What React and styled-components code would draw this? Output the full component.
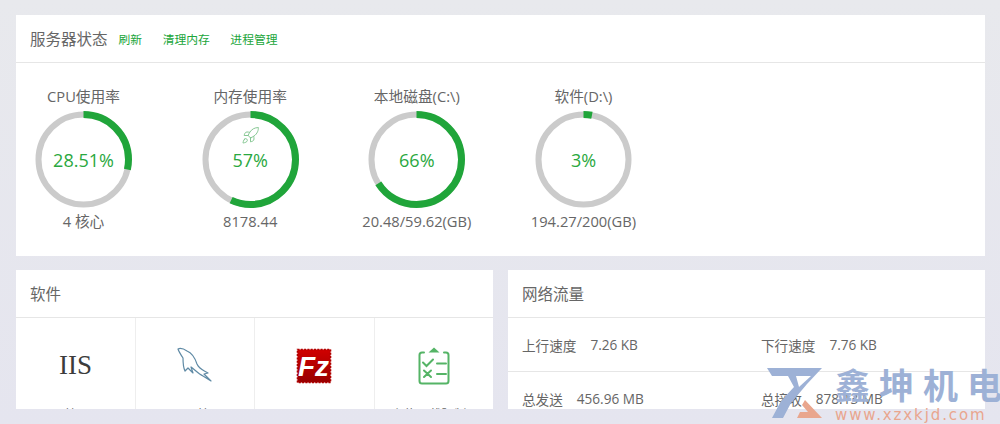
import React from 'react';
import styled, { createGlobalStyle } from 'styled-components';
import { Rocket } from 'lucide-react';

const GlobalStyle = createGlobalStyle`
  html, body {
    margin: 0;
    padding: 0;
    height: 424px;
    overflow: hidden;
    background: #e7e8ee;
    font-family: "Open Sans", "Noto Sans CJK SC", sans-serif;
    color: #666;
  }
  * { box-sizing: border-box; }
`;

const Page = styled.div`
  width: 1000px;
  height: 424px;
  padding: 15px 15px 0 16px;
  position: relative;
  overflow: hidden;
  background: linear-gradient(#e8e9ed, #e5e5ef);
`;

const Card = styled.section`
  background: #fff;
  height: ${props => props.$height}px;
  overflow: hidden;
`;

const CardHeader = styled.header`
  height: 48px;
  padding: 0 14px;
  display: flex;
  align-items: center;
  border-bottom: 1px solid #e6e6e6;
`;

const Title = styled.h2`
  margin: 0 11px 0 0;
  font-size: 15.5px;
  font-weight: 400;
  color: #666;
`;

const HeaderLink = styled.a`
  font-size: 11.8px;
  color: #20a53a;
  margin-right: 20.5px;
`;

const RingRow = styled.div`
  display: flex;
  gap: 30.67px;
  padding-top: 23px;
  margin-left: -0.5px;
`;

const RingItem = styled.div`
  width: 136px;
  display: flex;
  flex-direction: column;
  align-items: center;
  flex: none;
`;

const RingLabel = styled.div`
  font-size: 14.7px;
  line-height: 20px;
  white-space: nowrap;
`;

const RingBox = styled.div`
  position: relative;
  width: 97px;
  height: 97px;
  margin-top: 5px;
  display: flex;
  align-items: center;
  justify-content: center;
`;

const RingSvg = styled.svg`
  position: absolute;
  inset: 0;
`;

const Percent = styled.span`
  position: relative;
  font-size: 18px;
  color: #2aa840;
`;

const RocketMark = styled(Rocket)`
  position: absolute;
  top: 15px;
  left: 39px;
  color: #7fc48d;
`;

const RingSub = styled.div`
  font-size: 14.7px;
  line-height: 20px;
  margin-top: 3px;
  white-space: nowrap;
`;

const Columns = styled.div`
  display: flex;
  gap: 15px;
  margin-top: 14px;
`;

const Column = styled.div`
  width: 477px;
  flex: none;
`;

const SoftGrid = styled.div`
  display: grid;
  grid-template-columns: 120px 119px 119.5px 1fr;
`;

const SoftCell = styled.div`
  height: 120px;
  display: flex;
  flex-direction: column;
  align-items: center;
  padding-top: 17px;
  border-right: 1px solid #eee;

  &:last-child {
    border-right: none;
  }
`;

const SoftIcon = styled.div`
  height: 61px;
  width: 100%;
  display: flex;
  align-items: center;
  justify-content: center;
`;

const IisMark = styled.span`
  font-family: "Liberation Serif", serif;
  font-size: 27px;
  color: #3c3c3c;
`;

const SoftName = styled.div`
  margin-top: 11px;
  font-size: 12.5px;
  line-height: 16px;
  white-space: nowrap;
  color: #666;

  span {
    color: #20a53a;
    margin-left: 3px;
  }
`;

const NetRow = styled.div`
  display: grid;
  grid-template-columns: 239px 1fr;
  height: 54px;
  padding-left: 14px;
  align-items: center;
  border-bottom: 1px solid #e6e6e6;
  font-size: 13.6px;
`;

const NetStat = styled.div`
  display: flex;
  gap: 14px;
  white-space: nowrap;
`;

const Watermark = styled.div`
  position: absolute;
  left: 767px;
  top: 360px;
  width: 233px;
  height: 64px;
  display: flex;
  pointer-events: none;
`;

const WatermarkLogo = styled.svg`
  flex: none;
  margin: 7px 13px 0 0;
`;

const WatermarkText = styled.div`
  display: flex;
  flex-direction: column;
  white-space: nowrap;
`;

const WatermarkName = styled.div`
  font-family: "Noto Sans CJK SC", sans-serif;
  font-size: 35px;
  line-height: 48px;
  font-weight: 700;
  letter-spacing: 9px;
  color: #9db1d6;
`;

const WatermarkUrl = styled.div`
  font-family: "DejaVu Sans", sans-serif;
  font-size: 15px;
  line-height: 14px;
  letter-spacing: 1.9px;
  color: #e9a68e;
`;

const rings = [
  { label: 'CPU使用率', percent: 28.51, sub: '4 核心' },
  { label: '内存使用率', percent: 57, sub: '8178.44', rocket: true },
  { label: '本地磁盘(C:\\)', percent: 66, sub: '20.48/59.62(GB)' },
  { label: '软件(D:\\)', percent: 3, sub: '194.27/200(GB)' },
];

const RADIUS = 45;
const CIRC = 2 * Math.PI * RADIUS;

const Ring = ({ label, percent, sub, rocket }) => (
  <RingItem>
    <RingLabel>{label}</RingLabel>
    <RingBox>
      <RingSvg width="97" height="97" viewBox="0 0 97 97">
        <circle cx="48.5" cy="48.5" r={RADIUS} fill="none" stroke="#cbcbcb" strokeWidth="6" />
        <circle
          cx="48.5"
          cy="48.5"
          r={RADIUS}
          fill="none"
          stroke="#20a53a"
          strokeWidth="7"
          strokeDasharray={`${(CIRC * percent) / 100} ${CIRC}`}
          transform="rotate(-90 48.5 48.5)"
        />
      </RingSvg>
      {rocket && <RocketMark size={19} strokeWidth={1.2} />}
      <Percent>{percent}%</Percent>
    </RingBox>
    <RingSub>{sub}</RingSub>
  </RingItem>
);

const Dolphin = () => (
  <svg width="40" height="40" viewBox="0 0 40 40">
    <path
      d="M3 3C5 2 9 3 12 5C17 7 20 12 22 18C24 23 28 24 33 27L29 28C31 30 34 33 36 35L28 30C24 28 20 24 16 21L18 27L13 22L10 25C8 21 8 16 8 12C6 9 4 6 3 3Z"
      fill="none"
      stroke="#5f8aa5"
      strokeWidth="1.2"
      strokeLinejoin="round"
    />
  </svg>
);

const FileZilla = () => (
  <svg width="36" height="36" viewBox="0 0 36 36">
    <defs>
      <linearGradient id="fz" x1="0" y1="0" x2="0" y2="1">
        <stop offset="0" stopColor="#d00000" />
        <stop offset="1" stopColor="#980000" />
      </linearGradient>
    </defs>
    <rect x="1.5" y="1.5" width="33" height="33" fill="url(#fz)" stroke="#b00000" strokeWidth="1.6" strokeDasharray="2 1.3" />
    <text
      x="17.5"
      y="28"
      textAnchor="middle"
      fontFamily="Liberation Sans, sans-serif"
      fontSize="28"
      fontWeight="700"
      fontStyle="italic"
      fill="#fff"
    >
      Fz
    </text>
  </svg>
);

const Checklist = () => (
  <svg width="32" height="38" viewBox="0 0 32 38" fill="none" stroke="#55b466" strokeWidth="2" strokeLinecap="round">
    <path d="M16 0.5L21.5 5.5H10.5Z" fill="#55b466" stroke="none" />
    <path d="M6 5.5H4C2.5 5.5 1.5 6.5 1.5 8V34C1.5 35.5 2.5 36.5 4 36.5H28C29.5 36.5 30.5 35.5 30.5 34V8C30.5 6.5 29.5 5.5 28 5.5H26" />
    <path d="M5 15.5L8.5 19L15 12.5" />
    <path d="M19 16.5H28" />
    <path d="M6 23.5L13 30M13 23.5L6 30" />
    <path d="M19 27H28" />
  </svg>
);

const software = [
  { name: 'IIS管理', icon: <IisMark>IIS</IisMark> },
  { name: 'MySQL管理', icon: <Dolphin /> },
  { name: 'FileZilla Server', icon: <FileZilla /> },
  { name: '上传下载限制', icon: <Checklist /> },
];

const App = () => (
  <Page>
    <GlobalStyle />
    <Card $height={241}>
      <CardHeader>
        <Title>服务器状态</Title>
        <HeaderLink>刷新</HeaderLink>
        <HeaderLink>清理内存</HeaderLink>
        <HeaderLink>进程管理</HeaderLink>
      </CardHeader>
      <RingRow>
        {rings.map(ring => (
          <Ring key={ring.label} {...ring} />
        ))}
      </RingRow>
    </Card>
    <Columns>
      <Column>
        <Card $height={139}>
          <CardHeader>
            <Title>软件</Title>
          </CardHeader>
          <SoftGrid>
            {software.map(item => (
              <SoftCell key={item.name}>
                <SoftIcon>{item.icon}</SoftIcon>
                <SoftName>
                  {item.name}
                  <span>▸</span>
                </SoftName>
              </SoftCell>
            ))}
          </SoftGrid>
        </Card>
      </Column>
      <Column>
        <Card $height={139}>
          <CardHeader>
            <Title>网络流量</Title>
          </CardHeader>
          <NetRow>
            <NetStat>
              <span>上行速度</span>
              <span>7.26 KB</span>
            </NetStat>
            <NetStat>
              <span>下行速度</span>
              <span>7.76 KB</span>
            </NetStat>
          </NetRow>
          <NetRow>
            <NetStat>
              <span>总发送</span>
              <span>456.96 MB</span>
            </NetStat>
            <NetStat>
              <span>总接收</span>
              <span>878.13 MB</span>
            </NetStat>
          </NetRow>
        </Card>
      </Column>
    </Columns>
    <Watermark>
      <WatermarkLogo width="55" height="51" viewBox="0 0 55 51">
        <path d="M0 1H55L40 17L24 36L16 51H5L14 34L27 20L21 9H5Z" fill="#9db1d6" />
        <path d="M29 9H44L32 20Z" fill="#fff" />
        <path d="M38 33L55 51H30L33 45H41L35 38Z" fill="#e9a68e" />
      </WatermarkLogo>
      <WatermarkText>
        <WatermarkName>鑫坤机电</WatermarkName>
        <WatermarkUrl>www.xzxkjd.com</WatermarkUrl>
      </WatermarkText>
    </Watermark>
  </Page>
);

export default App;
